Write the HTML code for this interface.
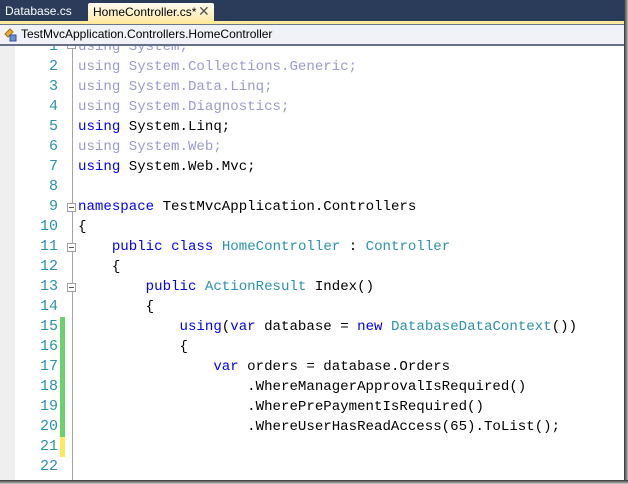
<!DOCTYPE html>
<html><head><style>
body{margin:0;width:628px;height:484px;overflow:hidden;background:#fff;position:relative;font-family:"Liberation Sans",sans-serif}
#tabs{position:absolute;left:0;top:0;width:624px;height:21px;background:#2b3c5a}
#t1{position:absolute;left:5px;top:4px;color:#fff;font-size:12px}
#t2{position:absolute;left:88px;top:3px;width:126px;height:19px;background:linear-gradient(#fffcf2,#ffe9a8);border-radius:2px 2px 0 0;font-size:12px;color:#000}
#t2 span{position:absolute;left:5px;top:2px}
#t2 b{position:absolute;left:110px;top:0px;font-weight:normal;color:#555;font-size:14px}
#yl{position:absolute;left:0;top:21px;width:624px;height:3px;background:#ffe99a}
#yl2{position:absolute;left:0;top:24px;width:624px;height:1px;background:#6b7590}
#nav{position:absolute;left:0;top:25px;width:624px;height:19px;background:#f1f2f7;border-bottom:2px solid #66708a;font-size:12px}
#nav span{position:absolute;left:21px;top:2px}
#code{position:absolute;left:0;top:46px;width:624px;height:434px;overflow:hidden}
#gut{position:absolute;left:0;top:0;width:15px;height:434px;background:#efefef}
#sep{position:absolute;left:72px;top:0;width:1px;height:434px;background:#a5a5a5}
.ln{position:absolute;left:20px;width:38px;text-align:right;color:#2b91af;font:15px/20px "Liberation Mono",monospace}
.c{position:absolute;left:78px;white-space:pre;font:14.1px/20px "Liberation Mono",monospace;color:#000}
.k{color:#0000ff}.g{color:#9a9ad0}.t{color:#2b91af}
.bx{position:absolute;left:67px;width:7px;height:7px;border:1px solid #a0a0a0;background:#fff}
.bx:after{content:"";position:absolute;left:1px;top:3px;width:5px;height:1px;background:#555}
#shr{position:absolute;left:624px;top:0;width:4px;height:484px;background:linear-gradient(90deg,#333,#bbb)}
#shb{position:absolute;left:0;top:480px;width:628px;height:4px;background:linear-gradient(#333,#ccc)}
</style></head><body>
<div id="tabs"><div id="t1">Database.cs</div><div id="t2"><span>HomeController.cs*</span><b>✕</b></div></div>
<div id="yl"></div><div id="yl2"></div>
<div id="code">
<div id="gut"></div><div id="sep"></div>
<div style="position:absolute;left:60px;top:271px;width:5px;height:120px;background:#6bd36b"></div>
<div style="position:absolute;left:60px;top:391px;width:5px;height:20px;background:#ffe95c"></div>
<div class="bx" style="top:-6px"></div>
<div class="bx" style="top:157px"></div>
<div class="bx" style="top:197px"></div>
<div class="bx" style="top:237px"></div>
<div class="ln" style="top:-9px">1</div><div class="c" style="top:-9px"><span class="g">using System;</span></div>
<div class="ln" style="top:11px">2</div><div class="c" style="top:11px"><span class="g">using System.Collections.Generic;</span></div>
<div class="ln" style="top:31px">3</div><div class="c" style="top:31px"><span class="g">using System.Data.Linq;</span></div>
<div class="ln" style="top:51px">4</div><div class="c" style="top:51px"><span class="g">using System.Diagnostics;</span></div>
<div class="ln" style="top:71px">5</div><div class="c" style="top:71px"><span class="k">using</span> System.Linq;</div>
<div class="ln" style="top:91px">6</div><div class="c" style="top:91px"><span class="g">using System.Web;</span></div>
<div class="ln" style="top:111px">7</div><div class="c" style="top:111px"><span class="k">using</span> System.Web.Mvc;</div>
<div class="ln" style="top:131px">8</div>
<div class="ln" style="top:151px">9</div><div class="c" style="top:151px"><span class="k">namespace</span> TestMvcApplication.Controllers</div>
<div class="ln" style="top:171px">10</div><div class="c" style="top:171px">{</div>
<div class="ln" style="top:191px">11</div><div class="c" style="top:191px">    <span class="k">public</span> <span class="k">class</span> <span class="t">HomeController</span> : <span class="t">Controller</span></div>
<div class="ln" style="top:211px">12</div><div class="c" style="top:211px">    {</div>
<div class="ln" style="top:231px">13</div><div class="c" style="top:231px">        <span class="k">public</span> <span class="t">ActionResult</span> Index()</div>
<div class="ln" style="top:251px">14</div><div class="c" style="top:251px">        {</div>
<div class="ln" style="top:271px">15</div><div class="c" style="top:271px">            <span class="k">using</span>(<span class="k">var</span> database = <span class="k">new</span> <span class="t">DatabaseDataContext</span>())</div>
<div class="ln" style="top:291px">16</div><div class="c" style="top:291px">            {</div>
<div class="ln" style="top:311px">17</div><div class="c" style="top:311px">                <span class="k">var</span> orders = database.Orders</div>
<div class="ln" style="top:331px">18</div><div class="c" style="top:331px">                    .WhereManagerApprovalIsRequired()</div>
<div class="ln" style="top:351px">19</div><div class="c" style="top:351px">                    .WherePrePaymentIsRequired()</div>
<div class="ln" style="top:371px">20</div><div class="c" style="top:371px">                    .WhereUserHasReadAccess(65).ToList();</div>
<div class="ln" style="top:391px">21</div>
<div class="ln" style="top:411px">22</div>
</div>
<div id="nav"><svg style="position:absolute;left:4px;top:3px" width="14" height="14"><path d="M1 6 L6 1 L9 4 L4 9Z" fill="#e8b030" stroke="#a07010"/><rect x="6" y="7" width="6" height="6" fill="#6a8fd0" stroke="#3050a0"/></svg><span>TestMvcApplication.Controllers.HomeController</span></div>
<div id="shr"></div><div id="shb"></div>
</body></html>
